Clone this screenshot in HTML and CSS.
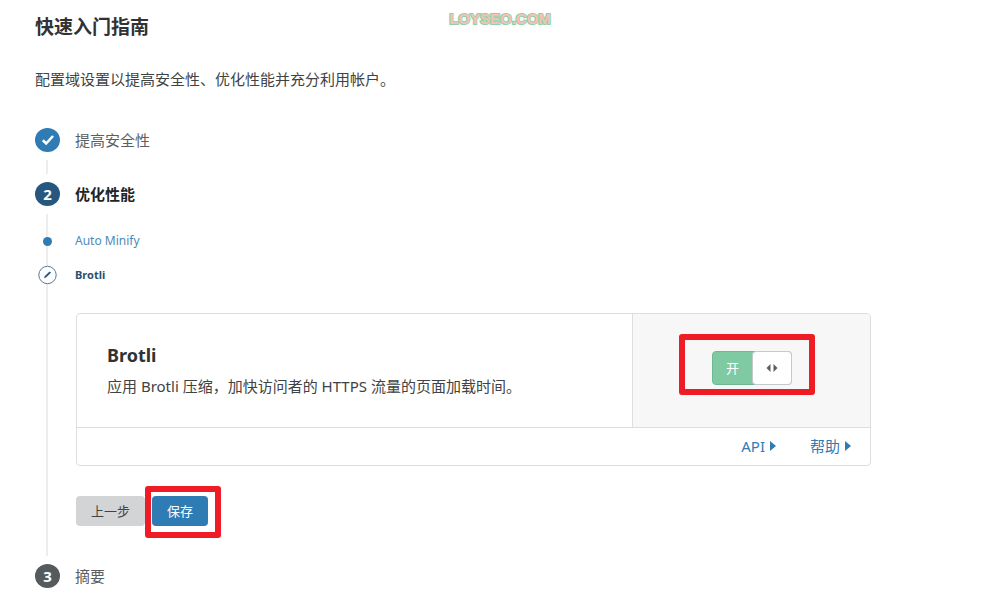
FILE: index.html
```html
<!DOCTYPE html>
<html lang="zh-CN">
<head>
<meta charset="utf-8">
<meta name="viewport" content="width=device-width, initial-scale=1">
<title>快速入门指南</title>
<link rel="stylesheet" href="styles.css">
</head>
<body>
<div class="watermark">LOYSEO.COM</div>
<main class="guide">
  <h1 class="guide-title">快速入门指南</h1>
  <p class="guide-intro">配置域设置以提高安全性、优化性能并充分利用帐户。</p>
  <ol class="steps">
    <li class="step">
      <div class="step-head">
        <span class="step-mark done">
          <svg width="14" height="12" viewBox="0 0 14 12" aria-hidden="true"><path d="M1.8 6.2 5.2 9.5 12 2" fill="none" stroke="#fff" stroke-width="2.6"/></svg>
        </span>
        <span class="step-name">提高安全性</span>
      </div>
      <div class="step-body short"></div>
    </li>
    <li class="step">
      <div class="step-head">
        <span class="step-mark current">2</span>
        <span class="step-name active">优化性能</span>
      </div>
      <div class="step-body">
        <ul class="substeps">
          <li class="substep">
            <span class="substep-mark"><span class="dot"></span></span>
            <a class="substep-link" href="#minify">Auto Minify</a>
          </li>
          <li class="substep">
            <span class="substep-mark">
              <svg width="20" height="20" viewBox="0 0 20 20" aria-hidden="true"><circle cx="10.5" cy="10" r="8.7" fill="#fff" stroke="#4f7da0"/><path d="M7 13.3 7.7 11.2 12.3 6.8Q13.1 6.4 13.6 7.1T13.4 8.3L9 12.6Z" fill="#245379"/></svg>
            </span>
            <span class="substep-current">Brotli</span>
          </li>
        </ul>
        <div class="step-content">
          <section class="card">
            <div class="card-main">
              <div class="card-text">
                <h2 class="card-title">Brotli</h2>
                <p class="card-desc">应用 Brotli 压缩，加快访问者的 HTTPS 流量的页面加载时间。</p>
              </div>
              <div class="card-control">
                <label class="toggle">
                  <input class="toggle-input" type="checkbox" role="switch" aria-label="Brotli" checked>
                  <span class="toggle-state">开</span>
                  <span class="toggle-knob">
                    <svg width="12" height="8" viewBox="0 0 12 8" aria-hidden="true"><path d="M4.5 0v8L.5 4ZM7.5 0v8l4-4Z" fill="#5c5f61"/></svg>
                  </span>
                </label>
              </div>
            </div>
            <div class="card-foot">
              <a class="foot-link" href="#api">API<svg width="6" height="10" viewBox="0 0 6 10" aria-hidden="true"><path d="M0 0v10l6-5Z" fill="#2f7bb3"/></svg></a>
              <a class="foot-link" href="#help">帮助<svg width="6" height="10" viewBox="0 0 6 10" aria-hidden="true"><path d="M0 0v10l6-5Z" fill="#2f7bb3"/></svg></a>
            </div>
          </section>
          <div class="actions">
            <button class="btn" type="button">上一步</button>
            <span class="save-wrap"><button class="btn primary" type="button">保存</button></span>
          </div>
        </div>
      </div>
    </li>
    <li class="step">
      <div class="step-head">
        <span class="step-mark">3</span>
        <span class="step-name">摘要</span>
      </div>
    </li>
  </ol>
</main>
</body>
</html>
```
FILE: styles.css
```css
* {
  box-sizing: border-box;
}

body {
  margin: 0;
  background: #fff;
  color: #404344;
  font: 15px/24px "Noto Sans", "Noto Sans CJK SC", sans-serif;
}

h1, h2, p, ol, ul {
  margin: 0;
  padding: 0;
}

ol, ul {
  list-style: none;
}

a {
  text-decoration: none;
}

svg {
  display: block;
  flex: none;
}

.watermark {
  position: absolute;
  top: 9px;
  left: 0;
  width: 100%;
  text-align: center;
  font: bold 15px/20px "Liberation Sans", sans-serif;
  color: #f5c3ae;
  -webkit-text-stroke: 2px #8fd0ae;
  paint-order: stroke fill;
  pointer-events: none;
}

.guide {
  max-width: 906px;
  padding: 13px 35px 24px;
}

.guide-title {
  margin-bottom: 26px;
  font-size: 19px;
  line-height: 28px;
  color: #303233;
}

.guide-intro {
  margin-bottom: 37px;
}

.step-head {
  display: flex;
  align-items: center;
  gap: 15px;
}

.step-mark {
  display: flex;
  align-items: center;
  justify-content: center;
  width: 25px;
  height: 24px;
  border-radius: 50%;
  background: #555a5c;
  color: #fff;
  font-size: 15px;
  font-weight: 700;
}

.step-mark.done {
  background: #2f7bb3;
}

.step-mark.current {
  background: #27577f;
}

.step-name {
  color: #5c5f61;
}

.step-name.active {
  color: #222425;
  font-weight: 700;
}

.step-body {
  margin: 8px 0 8px 11px;
  padding: 15px 0 30px;
  border-left: 2px solid #ededed;
}

.step-body.short {
  height: 14px;
  padding: 0;
}

.substeps {
  display: grid;
  gap: 10px;
  margin: 0 0 26px -11px;
}

.substep {
  display: flex;
  align-items: center;
  gap: 18px;
  font-size: 12px;
}

.substep-mark {
  display: flex;
  justify-content: center;
  width: 20px;
}

.dot {
  width: 9px;
  height: 9px;
  border-radius: 50%;
  background: #2f7bb3;
}

.substep-link {
  color: #4b8bb5;
}

.substep-current {
  color: #2b4f6c;
  font-size: 11px;
  font-weight: 700;
}

.step-content {
  padding-left: 28px;
}

.card {
  border: 1px solid #dedede;
  border-radius: 4px;
  overflow: hidden;
}

.card-main {
  display: grid;
  grid-template-columns: 7fr 3fr;
}

.card-text {
  padding: 29px 30px;
}

.card-title {
  margin-bottom: 7px;
  font-size: 18px;
  line-height: 24px;
  color: #303233;
}

.card-control {
  display: flex;
  justify-content: center;
  align-items: flex-start;
  padding-top: 37px;
  background: #f7f7f7;
  border-left: 1px solid #dedede;
}

.toggle {
  position: relative;
  display: flex;
  width: 80px;
  height: 34px;
  border: 1px solid #70b893;
  border-radius: 4px;
  background: #7fcaa3;
  cursor: pointer;
}

.toggle::after {
  content: "";
  position: absolute;
  inset: -18px -24px -11px -34px;
  border: 6px solid #ee1c25;
  border-radius: 3px;
  pointer-events: none;
}

.toggle-input {
  position: absolute;
  inset: 0;
  width: 100%;
  height: 100%;
  margin: 0;
  opacity: 0;
}

.toggle-state {
  flex: 1;
  text-align: center;
  font-size: 13px;
  line-height: 32px;
  color: #fff;
}

.toggle-knob {
  display: flex;
  align-items: center;
  justify-content: center;
  width: 40px;
  margin: -1px;
  border: 1px solid #c5c9cb;
  border-radius: 4px;
  background: #fff;
}

.card-foot {
  display: flex;
  justify-content: flex-end;
  gap: 34px;
  padding: 6px 19px 7px;
  border-top: 1px solid #dedede;
}

.foot-link {
  display: flex;
  align-items: center;
  gap: 5px;
  color: #2f7bb3;
}

.actions {
  display: flex;
  gap: 7px;
  margin-top: 30px;
}

.btn {
  display: block;
  height: 30px;
  padding: 0 15px;
  border: 0;
  border-radius: 4px;
  background: #d3d4d6;
  color: #404345;
  font: inherit;
  font-size: 13px;
  cursor: pointer;
}

.btn.primary {
  background: #2f7bb3;
  color: #fff;
}

.save-wrap {
  position: relative;
}

.save-wrap::after {
  content: "";
  position: absolute;
  inset: -10px -13px -12px -7px;
  border: 6px solid #ee1c25;
  border-radius: 3px;
  pointer-events: none;
}
```
